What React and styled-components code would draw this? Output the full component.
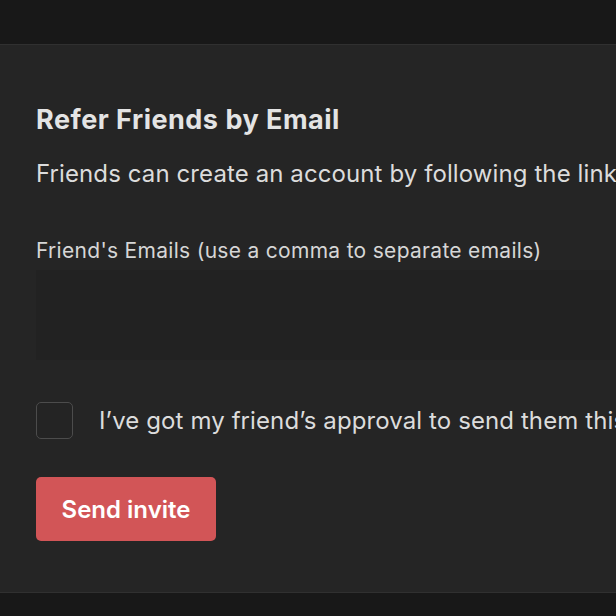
import styled, { createGlobalStyle } from 'styled-components'

const GlobalStyle = createGlobalStyle`
    html, body {
        margin: 0;
        padding: 0;
        background: #181818;
        overflow: hidden;
    }
    body {
        font-family: Inter, "Noto Sans", "Liberation Sans", sans-serif;
        -webkit-font-smoothing: antialiased;
    }
`

const Page = styled.div`
    min-height: 616px;
    padding-top: 44px;
    box-sizing: border-box;
`

const Panel = styled.section`
    width: 900px;
    height: 549px;
    box-sizing: border-box;
    background: #252525;
    border-top: 1px solid #303030;
    border-bottom: 1px solid #303030;
    padding: 60px 36px 0;
    display: flex;
    flex-direction: column;
    align-items: flex-start;
`

const Title = styled.h2`
    margin: 0;
    font-size: 27px;
    line-height: 30px;
    font-weight: 700;
    color: #e4e4e4;
    letter-spacing: 0.5px;
`

const Lead = styled.p`
    margin: 25px 0 0;
    font-size: 24px;
    line-height: 28px;
    color: #dcdcdc;
    letter-spacing: 0.1px;
    white-space: nowrap;
`

const FieldLabel = styled.label`
    margin-top: 50px;
    font-size: 21px;
    line-height: 25px;
    color: #d6d6d6;
    letter-spacing: 0.3px;
    white-space: nowrap;
`

const EmailsInput = styled.textarea`
    margin-top: 7px;
    width: 100%;
    height: 90px;
    box-sizing: border-box;
    background: #222222;
    border: none;
    outline: none;
    resize: none;
    padding: 10px 12px;
    font: inherit;
    font-size: 20px;
    color: #ddd;
`

const CheckRow = styled.label`
    margin-top: 42px;
    display: flex;
    align-items: center;
    gap: 26px;
    cursor: pointer;
`

const Box = styled.input`
    appearance: none;
    margin: 0;
    width: 37px;
    height: 37px;
    box-sizing: border-box;
    border: 1.5px solid #4c4c4c;
    border-radius: 5px;
    background: #242424;
`

const CheckText = styled.span`
    font-size: 24px;
    line-height: 28px;
    color: #dcdcdc;
    letter-spacing: 0.1px;
    white-space: nowrap;
`

const SendButton = styled.button`
    margin-top: 38px;
    width: 180px;
    height: 64px;
    border: none;
    border-radius: 5px;
    background: #d25557;
    color: #fff;
    font-family: inherit;
    font-size: 24px;
    font-weight: 600;
    cursor: pointer;
`

export default function App() {
    return (
        <>
            <GlobalStyle />
            <Page>
                <Panel>
                    <Title>Refer Friends by Email</Title>
                    <Lead>Friends can create an account by following the link we send them.</Lead>
                    <FieldLabel htmlFor='emails'>Friend's Emails (use a comma to separate emails)</FieldLabel>
                    <EmailsInput id='emails' name='emails' />
                    <CheckRow>
                        <Box type='checkbox' />
                        <CheckText>I’ve got my friend’s approval to send them this email.</CheckText>
                    </CheckRow>
                    <SendButton type='button'>Send invite</SendButton>
                </Panel>
            </Page>
        </>
    )
}
